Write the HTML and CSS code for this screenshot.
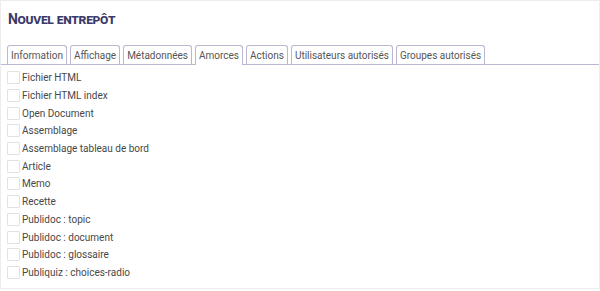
FILE: index.html
```html
<!DOCTYPE html>
<html lang="fr">
<head>
    <meta charset="UTF-8">
    <title>Nouvel entrepôt</title>
    <link rel="stylesheet" href="styles.css">
</head>
<body>
    <div class="panel">
        <h1 class="title">Nouvel entrepôt</h1>
        <div class="tabs">
            <span class="tab">Information</span>
            <span class="tab">Affichage</span>
            <span class="tab">Métadonnées</span>
            <span class="tab active">Amorces</span>
            <span class="tab">Actions</span>
            <span class="tab">Utilisateurs autorisés</span>
            <span class="tab">Groupes autorisés</span>
        </div>
        <ul class="options">
            <li><span class="check"></span>Fichier HTML</li>
            <li><span class="check"></span>Fichier HTML index</li>
            <li><span class="check"></span>Open Document</li>
            <li><span class="check"></span>Assemblage</li>
            <li><span class="check"></span>Assemblage tableau de bord</li>
            <li><span class="check"></span>Article</li>
            <li><span class="check"></span>Memo</li>
            <li><span class="check"></span>Recette</li>
            <li><span class="check"></span>Publidoc : topic</li>
            <li><span class="check"></span>Publidoc : document</li>
            <li><span class="check"></span>Publidoc : glossaire</li>
            <li><span class="check"></span>Publiquiz : choices-radio</li>
        </ul>
    </div>
</body>
</html>
```

FILE: styles.css
```css
body {
    margin: 0;
    font-family: Roboto, "Liberation Sans", sans-serif;
    background-color: #fff;
}
.panel {
    width: 598px;
    height: 287px;
    border: 1px solid #ececec;
}
.title {
    margin: 0;
    padding: 9px 0 0 7px;
    font-size: 14px;
    font-weight: bold;
    font-variant: small-caps;
    letter-spacing: -0.3px;
    color: #3b3a68;
    line-height: 18px;
}
.tabs {
    display: flex;
    gap: 3px;
    margin-top: 17px;
    padding-left: 6px;
    border-bottom: 1px solid #bbb7d0;
}
.tab {
    border: 1px solid #bbb7d0;
    border-bottom: none;
    border-radius: 3px 3px 0 0;
    padding: 2px 3px 1px;
    font-size: 10px;
    line-height: 15px;
    color: #555;
}
.tab.active {
    margin-bottom: -1px;
    padding-bottom: 2px;
    background-color: #fff;
}
.options {
    list-style: none;
    margin: 4px 0 0;
    padding: 0 0 0 6px;
}
.options li {
    display: flex;
    align-items: center;
    height: 17.7px;
    font-size: 10px;
    color: #484848;
}
.check {
    width: 11px;
    height: 11px;
    border: 1px solid #e2e2e2;
    border-radius: 1px;
    margin-right: 2px;
}
```
